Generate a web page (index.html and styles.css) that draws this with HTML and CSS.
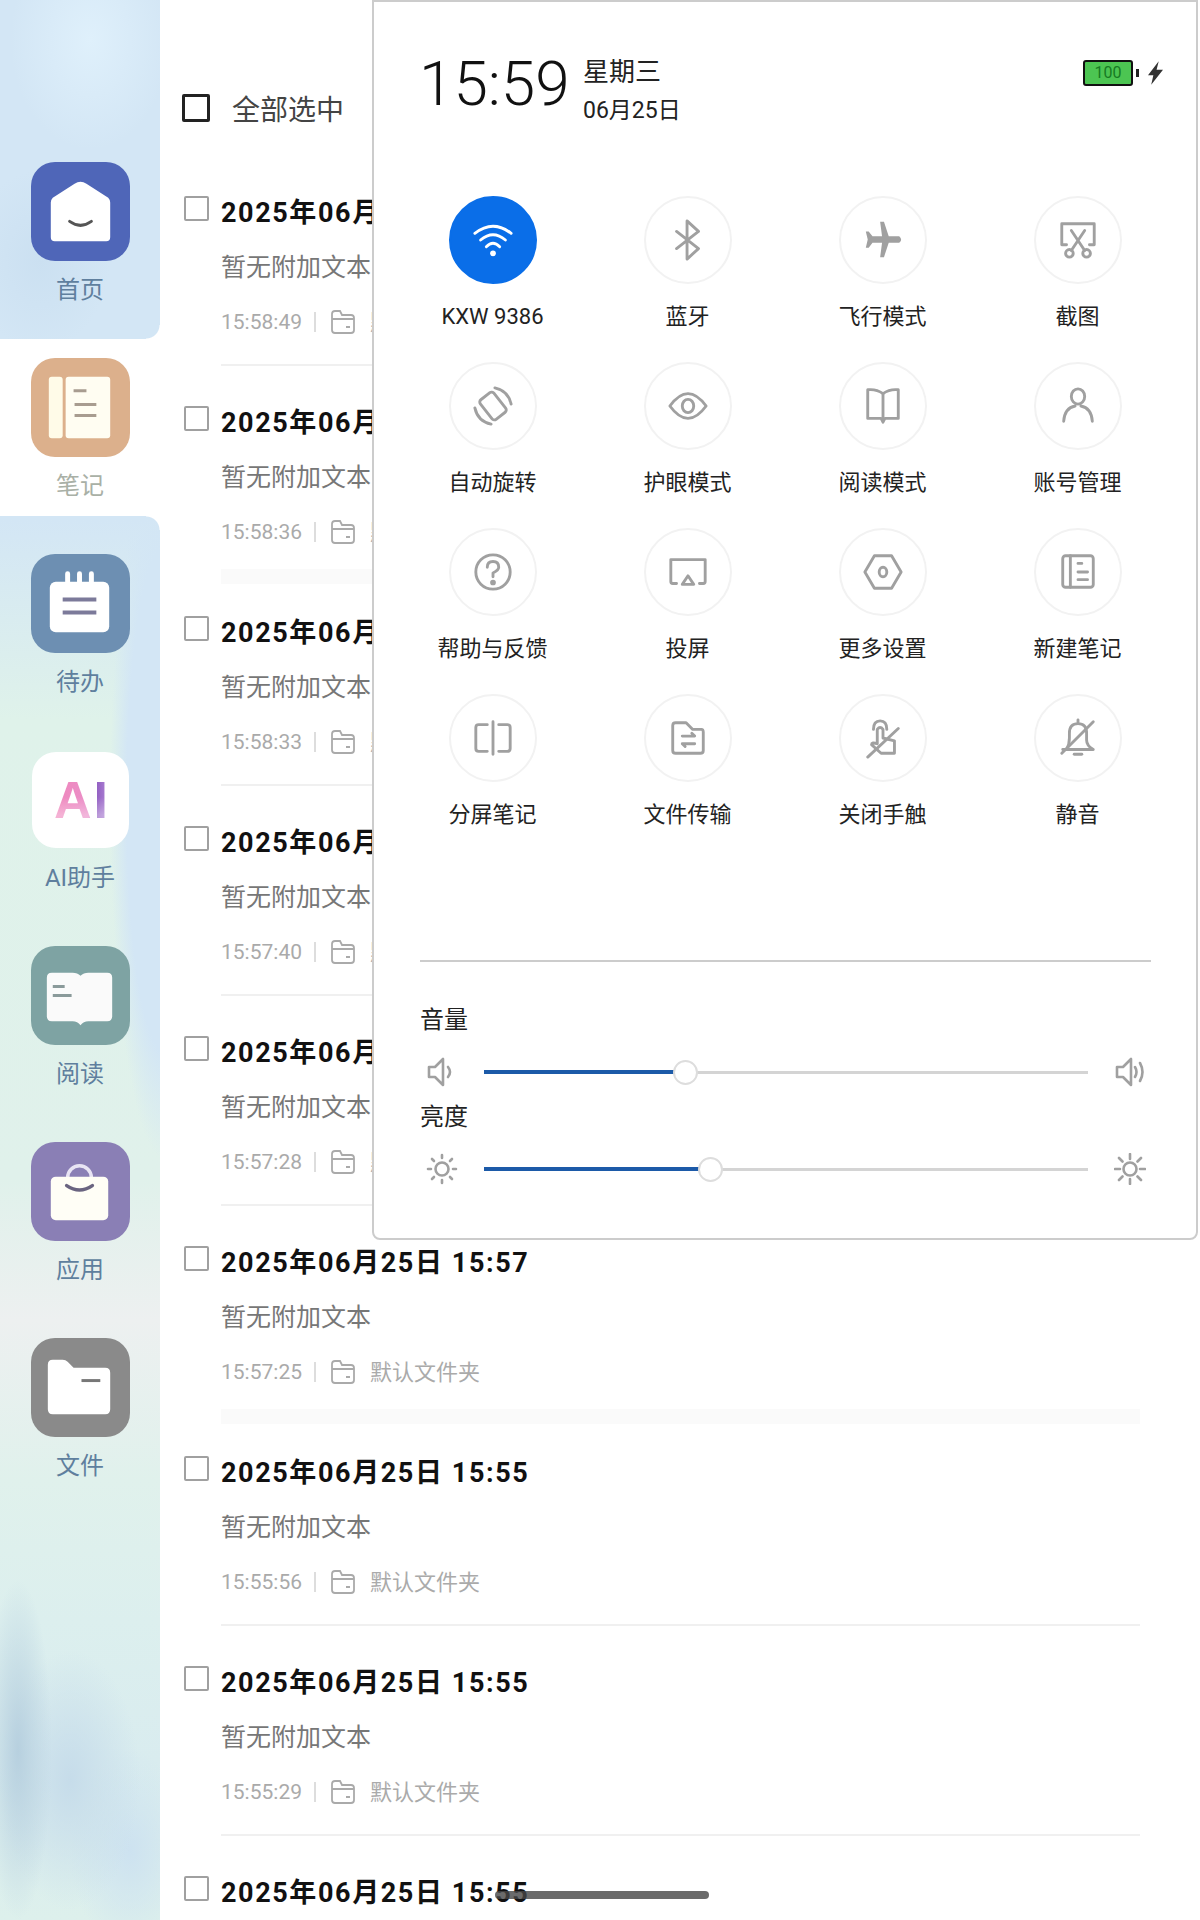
FILE: index.html
```html
<!DOCTYPE html>
<html lang="zh-CN">
<head>
    <meta charset="UTF-8">
    <meta name="viewport" content="width=device-width, initial-scale=1.0">
    <title>笔记</title>
    <link rel="stylesheet" href="styles.css">
</head>
<body>
<div class="app">

    <!-- left navigation -->
    <nav class="sidebar">
        <div class="nav-item">
            <div class="nav-icon home">
                <svg viewBox="0 0 100 100"><path d="M50 20 Q53 20 56 22 L78 36 Q80 38 80 41 V76 Q80 80 76 80 H24 Q20 80 20 76 V41 Q20 38 22 36 L44 22 Q47 20 50 20Z" fill="#fff"/><path d="M39 60 Q50 68 61 60" fill="none" stroke="#555" stroke-width="3" stroke-linecap="round"/></svg>
            </div>
            <span class="nav-label">首页</span>
        </div>
        <div class="nav-item active">
            <div class="nav-icon notes">
                <svg viewBox="0 0 100 100"><rect x="18" y="19" width="14" height="62" rx="3" fill="#fffbe8"/><rect x="35" y="19" width="45" height="62" rx="3" fill="#fffdf2"/><path d="M43 33H56M44 47H66M44 58H66" stroke="#a89c90" stroke-width="3"/></svg>
            </div>
            <span class="nav-label">笔记</span>
        </div>
        <div class="nav-item">
            <div class="nav-icon todo">
                <svg viewBox="0 0 100 100"><rect x="19" y="28" width="60" height="51" rx="6" fill="#fff"/><path d="M37 28V20M49 28V20M61 28V20" stroke="#fff" stroke-width="5" stroke-linecap="round"/><path d="M32 46H66M32 59H66" stroke="#7c7a9a" stroke-width="4"/></svg>
            </div>
            <span class="nav-label">待办</span>
        </div>
        <div class="nav-item">
            <div class="nav-icon ai"><span class="ai-text">AI</span></div>
            <span class="nav-label">AI助手</span>
        </div>
        <div class="nav-item">
            <div class="nav-icon read">
                <svg viewBox="0 0 100 100"><path d="M16 32 Q16 27 21 27 H42 Q47 27 50 30 Q53 27 58 27 H77 Q82 27 82 32 V71 Q82 76 77 76 H58 Q53 76 50 80 Q47 76 42 76 H21 Q16 76 16 71Z" fill="#fafafa"/><path d="M22 41H34M22 50H41" stroke="#8a9a9a" stroke-width="3"/></svg>
            </div>
            <span class="nav-label">阅读</span>
        </div>
        <div class="nav-item">
            <div class="nav-icon apps">
                <svg viewBox="0 0 100 100"><circle cx="49" cy="36" r="12" fill="none" stroke="#e8e4f4" stroke-width="3.5"/><rect x="20" y="35" width="58" height="44" rx="5" fill="#fffef6"/><path d="M36 44 Q49 53 62 44" fill="none" stroke="#6a6480" stroke-width="3.5" stroke-linecap="round"/></svg>
            </div>
            <span class="nav-label">应用</span>
        </div>
        <div class="nav-item">
            <div class="nav-icon files">
                <svg viewBox="0 0 100 100"><path d="M17 27 Q17 22 22 22 H32 Q35 22 37 24 L43 30 H75 Q80 30 80 35 V72 Q80 77 75 77 H22 Q17 77 17 72Z" fill="#fff"/><path d="M51 43H70" stroke="#777" stroke-width="3"/></svg>
            </div>
            <span class="nav-label">文件</span>
        </div>
    </nav>

    <!-- note list -->
    <main class="list">
        <div class="select-all">
            <span class="check check-all"></span>
            <span>全部选中</span>
        </div>
        <ul id="noteList" class="notes-list"></ul>
    </main>

    <!-- pulled down control panel -->
    <section class="panel">
        <header class="panel-head">
            <div class="clock">15:59</div>
            <div class="date">
                <div>星期三</div>
                <div class="date-day">06月25日</div>
            </div>
            <div class="battery">
                <span class="battery-body">100</span>
                <span class="battery-nub"></span>
                <svg class="bolt" viewBox="0 0 14 22"><path d="M10 0 L0 13 H5 L3 22 L14 8 H8Z" fill="#333"/></svg>
            </div>
        </header>

        <div class="tiles">
            <div class="tile on">
                <div class="tile-icon">
                    <svg viewBox="0 0 44 44" fill="none" stroke="#fff" stroke-width="3" stroke-linecap="round"><path d="M3 15 Q22 0 41 15"/><path d="M9 22 Q22 11 35 22"/><path d="M15 29 Q22 22 29 29"/><circle cx="22" cy="36" r="3" fill="#fff" stroke="none"/></svg>
                </div>
                <span>KXW 9386</span>
            </div>
            <div class="tile">
                <div class="tile-icon">
                    <svg viewBox="0 0 44 44"><path d="M10 13 L33 31 L21 42 V2 L33 13 L10 31"/></svg>
                </div>
                <span>蓝牙</span>
            </div>
            <div class="tile">
                <div class="tile-icon">
                    <svg viewBox="0 0 44 44"><path d="M19 3 H23 L28 18 H39 Q43 22 39 25 H28 L23 40 H19 L21 25 H11 L7 30 H4 L6 21.5 L4 13 H7 L11 18 H21Z" fill="#a0a0a0" stroke="none"/></svg>
                </div>
                <span>飞行模式</span>
            </div>
            <div class="tile">
                <div class="tile-icon">
                    <svg viewBox="0 0 44 44"><path d="M10 27 H5 V5 H39 V27 H34"/><path d="M15 12 L29 33 M29 12 L15 33"/><circle cx="13" cy="36" r="4"/><circle cx="31" cy="36" r="4"/></svg>
                </div>
                <span>截图</span>
            </div>

            <div class="tile">
                <div class="tile-icon">
                    <svg viewBox="0 0 44 44"><rect x="13" y="9" width="18" height="26" rx="3" transform="rotate(-38 22 22)"/><path d="M24 3 Q38 6 41 20 M20 41 Q6 38 3 24"/></svg>
                </div>
                <span>自动旋转</span>
            </div>
            <div class="tile">
                <div class="tile-icon">
                    <svg viewBox="0 0 44 44"><path d="M3 22 Q22 -4 41 22 Q22 48 3 22Z"/><ellipse cx="22" cy="22" rx="6" ry="7"/></svg>
                </div>
                <span>护眼模式</span>
            </div>
            <div class="tile">
                <div class="tile-icon">
                    <svg viewBox="0 0 44 44"><path d="M22 9 Q15 4 6 5 V35 H20 L22 39 L24 35 H38 V5 Q29 4 22 9Z"/><path d="M22 9 V35"/></svg>
                </div>
                <span>阅读模式</span>
            </div>
            <div class="tile">
                <div class="tile-icon">
                    <svg viewBox="0 0 44 44"><ellipse cx="22" cy="12" rx="7" ry="8"/><path d="M7 38 Q8 24 19 22 M37 38 Q36 24 25 22"/></svg>
                </div>
                <span>账号管理</span>
            </div>

            <div class="tile">
                <div class="tile-icon">
                    <svg viewBox="0 0 44 44"><circle cx="22" cy="22" r="18"/><path d="M16 17 Q16 11 22 11 Q28 11 28 17 Q28 20 22 23 V27"/><circle cx="22" cy="33" r="1.5" fill="#a0a0a0"/></svg>
                </div>
                <span>帮助与反馈</span>
            </div>
            <div class="tile">
                <div class="tile-icon">
                    <svg viewBox="0 0 44 44"><path d="M10 34 H6 Q4 34 4 32 V9 H40 V32 Q40 34 38 34 H34"/><path d="M22 26 L28 35 H16Z"/></svg>
                </div>
                <span>投屏</span>
            </div>
            <div class="tile">
                <div class="tile-icon">
                    <svg viewBox="0 0 44 44"><path d="M13 5 H31 L41 22 L31 39 H13 L3 22Z"/><ellipse cx="22" cy="22" rx="4" ry="5"/></svg>
                </div>
                <span>更多设置</span>
            </div>
            <div class="tile">
                <div class="tile-icon">
                    <svg viewBox="0 0 44 44"><rect x="6" y="5" width="32" height="33" rx="3"/><path d="M14 5 V38 M22 13 H26 M22 22 H32 M22 30 H32"/></svg>
                </div>
                <span>新建笔记</span>
            </div>

            <div class="tile">
                <div class="tile-icon">
                    <svg viewBox="0 0 44 44"><path d="M16 8 H7 Q4 8 4 11 V33 Q4 36 7 36 H16 M28 8 H37 Q40 8 40 11 V33 Q40 36 37 36 H28 M22 5 V39"/></svg>
                </div>
                <span>分屏笔记</span>
            </div>
            <div class="tile">
                <div class="tile-icon">
                    <svg viewBox="0 0 44 44"><path d="M6 9 Q6 6 9 6 H20 L27 13 H36 Q38 13 38 16 V35 Q38 38 35 38 H9 Q6 38 6 35Z"/><path d="M16 20 H29 L26 17 M29 28 H16 L19 31"/></svg>
                </div>
                <span>文件传输</span>
            </div>
            <div class="tile">
                <div class="tile-icon">
                    <svg viewBox="0 0 44 44"><path d="M12 13 Q12 4 19 4 Q26 4 26 13"/><path d="M16 28 V13 Q19 9 22 13 V22 L34 25 V38 H20 L10 29 Q10 26 16 28"/><path d="M6 42 L38 12"/></svg>
                </div>
                <span>关闭手触</span>
            </div>
            <div class="tile">
                <div class="tile-icon">
                    <svg viewBox="0 0 44 44"><path d="M22 3 V7 M10 34 Q13 29 13 22 V17 Q13 7 22 7 Q31 7 31 17 V24 Q31 30 38 34 H6"/><path d="M18 39 H26"/><path d="M5 38 L38 5"/></svg>
                </div>
                <span>静音</span>
            </div>
        </div>

        <div class="panel-rule"></div>

        <div class="sliders">
            <div class="slider-label">音量</div>
            <div class="slider-row">
                <svg class="slider-icon" viewBox="0 0 32 32"><path d="M3 11 H9 L17 3 V29 L9 21 H3Z"/><path d="M22 11 Q26 16 22 21"/></svg>
                <div class="track"><div class="fill" style="width:201px"></div><div class="thumb" style="left:201px"></div></div>
                <svg class="slider-icon" viewBox="0 0 32 32"><path d="M3 11 H9 L17 3 V29 L9 21 H3Z"/><path d="M21 11 Q24 16 21 21 M26 7 Q31 16 26 25"/></svg>
            </div>
            <div class="slider-label">亮度</div>
            <div class="slider-row">
                <svg class="slider-icon" viewBox="0 0 32 32"><circle cx="16" cy="16" r="6.5"/><path d="M16 2 V5 M16 27 V30 M2 16 H5 M27 16 H30 M6 6 L8 8 M24 24 L26 26 M6 26 L8 24 M24 8 L26 6"/></svg>
                <div class="track"><div class="fill" style="width:226px"></div><div class="thumb" style="left:226px"></div></div>
                <svg class="slider-icon" viewBox="0 0 32 32"><circle cx="16" cy="16" r="6.5"/><path d="M16 1 V6 M16 26 V31 M1 16 H6 M26 16 H31 M5 5 L8.5 8.5 M23.5 23.5 L27 27 M5 27 L8.5 23.5 M23.5 8.5 L27 5"/></svg>
            </div>
        </div>
    </section>

    <div class="home-bar"></div>
</div>

<script>
    const notes = [
        { title: '2025年06月25日 15:58', time: '15:58:49' },
        { title: '2025年06月25日 15:58', time: '15:58:36', thick: true },
        { title: '2025年06月25日 15:58', time: '15:58:33' },
        { title: '2025年06月25日 15:57', time: '15:57:40' },
        { title: '2025年06月25日 15:57', time: '15:57:28' },
        { title: '2025年06月25日 15:57', time: '15:57:25', thick: true },
        { title: '2025年06月25日 15:55', time: '15:55:56' },
        { title: '2025年06月25日 15:55', time: '15:55:29' },
        { title: '2025年06月25日 15:55' } // last one runs off the screen
    ];

    function renderNotes() {
        const noteList = document.getElementById('noteList');

        notes.forEach(note => {
            const li = document.createElement('li');
            li.className = `note ${note.thick ? 'thick' : ''}`;
            let html = `<span class="check"></span>
                <div class="note-body">
                    <div class="note-title">${note.title}</div>`;
            if (note.time) {
                html += `<div class="note-sub">暂无附加文本</div>
                    <div class="note-meta">
                        <span>${note.time}</span>
                        <i class="meta-sep"></i>
                        <svg class="meta-folder" viewBox="0 0 24 24" fill="none" stroke="#aaa" stroke-width="1.8"><path d="M1 4 Q1 1 4 1 H9 L11 5 H20 Q23 5 23 8 V20 Q23 23 20 23 H4 Q1 23 1 20Z"/><path d="M1 9 H23 M15 17 H19"/></svg>
                        <span class="meta-folder-name">默认文件夹</span>
                    </div>`;
            }
            li.innerHTML = html + '</div>';
            noteList.appendChild(li);
        });
    }

    renderNotes();
</script>
</body>
</html>
```

FILE: styles.css
```css
* {
    box-sizing: border-box;
}

html, body {
    margin: 0;
    height: 1920px;
    overflow: hidden;
    background-color: #fff;
}

body {
    font-family: Roboto, "Noto Sans CJK SC", sans-serif;
    color: #222;
}

.app {
    position: relative;
    display: flex;
    height: 1920px;
    overflow: hidden;
}

/* sidebar */
.sidebar {
    width: 160px;
    flex-shrink: 0;
    padding-top: 143px;
    background-color: #d3e6f5;
    background-image:
        radial-gradient(ellipse 34px 170px at 18px 1750px, #b7d0df 0%, rgba(183, 208, 223, 0) 100%),
        radial-gradient(ellipse 70px 130px at 70px 1780px, #c6dcea 0%, rgba(198, 220, 234, 0) 100%),
        radial-gradient(ellipse 60px 100px at 130px 1850px, #cde2f0 0%, rgba(205, 226, 240, 0) 100%),
        radial-gradient(ellipse 80px 110px at 90px 40px, #dff0fb 0%, rgba(223, 240, 251, 0) 100%),
        radial-gradient(ellipse 70px 90px at 40px 260px, #cbe0f1 0%, rgba(203, 224, 241, 0) 100%),
        radial-gradient(ellipse 55px 360px at 165px 800px, #d3e6f5 70%, rgba(211, 230, 245, 0) 100%),
        linear-gradient(180deg, #d3e6f5 0, #d3e6f5 520px, #dff2ea 720px, #e0f1eb 1180px, #edf0f0 1320px, #e0f1ec 1480px, #dcefee 1620px, #d9ecef 1760px, #ddf0ec 1920px);
    background-repeat: no-repeat;
}

.nav-item {
    position: relative;
    display: flex;
    flex-direction: column;
    align-items: center;
    height: 177px;
    margin-bottom: 19px;
    padding-top: 19px;
}

.nav-item.active {
    background-color: #fff;
}

/* rounded corners where the white tab meets the sidebar */
.nav-item.active::before,
.nav-item.active::after {
    content: "";
    position: absolute;
    right: 0;
    width: 14px;
    height: 14px;
}

.nav-item.active::before {
    top: -14px;
    background: radial-gradient(circle at 0 0, transparent 13px, #fff 14px);
}

.nav-item.active::after {
    bottom: -14px;
    background: radial-gradient(circle at 0 100%, transparent 13px, #fff 14px);
}

.nav-icon {
    width: 99px;
    height: 99px;
    border-radius: 24px;
    display: flex;
    align-items: center;
    justify-content: center;
}

.nav-icon svg {
    width: 99px;
    height: 99px;
}

.home { background-color: #4f66b8; }
.notes { background-color: #dcb08c; }
.todo { background-color: #6d8fb2; }
.read { background-color: #7ea3a3; }
.apps { background-color: #8a7fb5; }
.files { background-color: #8a8a8a; }

.ai {
    background-color: #fff;
    height: 96px;
    width: 97px;
    margin-top: 2px;
    margin-bottom: 1px;
}

.ai-text {
    font-family: "Liberation Sans", sans-serif;
    font-weight: 700;
    font-size: 52px;
    letter-spacing: 2px;
    margin-left: 4px;
    background: linear-gradient(90deg, #f088bc 0%, #ea8ec8 62%, #8c58be 72%, #b48ad8 100%);
    -webkit-background-clip: text;
    background-clip: text;
    color: transparent;
    -webkit-mask-image: linear-gradient(180deg, #000 45%, rgba(0, 0, 0, 0.65) 75%);
    mask-image: linear-gradient(180deg, #000 45%, rgba(0, 0, 0, 0.65) 75%);
}

.nav-label {
    margin-top: 8px;
    font-size: 24px;
    line-height: 42px;
    color: #5f7f9e;
}

.nav-item.active .nav-label {
    color: #a9b0a6;
}

/* list */
.list {
    flex-grow: 1;
    min-width: 0;
}

.select-all {
    display: flex;
    align-items: center;
    gap: 22px;
    height: 48px;
    margin-top: 84px;
    margin-left: 22px;
    font-size: 28px;
    color: #444;
}

.check {
    display: block;
    flex-shrink: 0;
    width: 25px;
    height: 25px;
    border: 2px solid #a0a0a0;
    border-radius: 2px;
}

.check-all {
    width: 28px;
    height: 28px;
    border: 3px solid #222;
}

.notes-list {
    list-style-type: none;
    margin: 0;
    padding: 0;
    margin-top: 56px;
}

.note {
    display: flex;
    gap: 12px;
    height: 210px;
    padding-left: 24px;
    padding-top: 10px;
}

.note .check {
    margin-top: -2px;
}

.note-body {
    flex-grow: 1;
    margin-right: 60px;
    height: 168px;
    border-bottom: 2px solid #f0f0f0;
}

.note.thick .note-body {
    height: 176px;
    border-bottom: 15px solid #fafafa;
}

.note-title {
    margin-top: -5px;
    font-size: 27px;
    line-height: 40px;
    font-weight: 700;
    letter-spacing: 1.6px;
    color: #111;
    white-space: nowrap;
}

.note-sub {
    margin-top: 15px;
    font-size: 25px;
    line-height: 40px;
    color: #777;
}

.note-meta {
    display: flex;
    align-items: center;
    gap: 12px;
    margin-top: 17px;
    font-size: 21px;
    line-height: 32px;
    color: #aaa;
    white-space: nowrap;
}

.meta-folder-name {
    font-size: 22px;
    margin-top: 2px;
}

.meta-sep {
    width: 2px;
    height: 20px;
    background-color: #ddd;
    margin-right: 3px;
}

.meta-folder {
    width: 24px;
    height: 24px;
    margin-right: 3px;
}

/* control panel */
.panel {
    position: absolute;
    top: 0;
    left: 372px;
    width: 826px;
    height: 1240px;
    padding: 0 45px 0 46px;
    background-color: #fff;
    border: 2px solid #ccc;
    border-radius: 0 0 8px 8px;
}

.panel-head {
    display: flex;
    align-items: flex-start;
    height: 194px;
    padding-top: 46px;
}

.clock {
    font-size: 62px;
    line-height: 72px;
    font-weight: 300;
    color: #111;
    width: 164px;
    margin-left: -1px;
}

.date {
    font-size: 26px;
    line-height: 37px;
    padding-top: 6px;
    color: #222;
}

.date-day {
    font-size: 23px;
    margin-top: 1px;
}

.battery {
    display: flex;
    align-items: center;
    margin-left: auto;
    margin-top: 12px;
    margin-right: -12px;
}

.battery-body {
    width: 50px;
    height: 26px;
    background-color: #4cc552;
    border: 2px solid #111;
    border-radius: 3px;
    font-size: 16px;
    line-height: 22px;
    text-align: center;
    color: #167a22;
}

.battery-nub {
    width: 3px;
    height: 8px;
    margin-left: 3px;
    background-color: #222;
}

.bolt {
    width: 15px;
    height: 24px;
    margin-left: 9px;
}

.tiles {
    display: grid;
    grid-template-columns: repeat(4, 195px);
    grid-auto-rows: 166px;
    margin-left: -25px;
    height: 764px;
    width: 780px;
}

.tile {
    display: flex;
    flex-direction: column;
    align-items: center;
    font-size: 22px;
    line-height: 30px;
    color: #222;
}

.tile-icon {
    width: 88px;
    height: 88px;
    margin-bottom: 18px;
    border: 2px solid #f2f2f2;
    border-radius: 50%;
    display: flex;
    align-items: center;
    justify-content: center;
}

.tile-icon svg {
    width: 42px;
    height: 42px;
    fill: none;
    stroke: #a0a0a0;
    stroke-width: 3;
    stroke-linejoin: round;
    stroke-linecap: round;
}

.tile.on .tile-icon {
    background-color: #0a6ee8;
    border-color: #0a6ee8;
}

.tile.on .tile-icon svg {
    stroke: #fff;
}

.panel-rule {
    width: 731px;
    height: 2px;
    background-color: #ccc;
}

.sliders {
    padding-top: 40px;
}

.slider-label {
    font-size: 24px;
    line-height: 36px;
    color: #222;
}

.slider-row {
    display: flex;
    align-items: center;
    height: 40px;
    margin-top: 14px;
    margin-bottom: 7px;
}

.slider-icon {
    width: 32px;
    height: 32px;
    flex-shrink: 0;
    fill: none;
    stroke: #a0a0a0;
    stroke-width: 2.6;
    stroke-linejoin: round;
    stroke-linecap: round;
}

.slider-row .slider-icon:first-child {
    margin-left: 6px;
    margin-right: 26px;
}

.slider-row .slider-icon:last-child {
    margin-left: 26px;
}

.track {
    position: relative;
    width: 604px;
    height: 3px;
    background-color: #d4d4d4;
}

.fill {
    position: absolute;
    top: -1px;
    left: 0;
    height: 4px;
    background-color: #1c5aa8;
}

.thumb {
    position: absolute;
    top: -11px;
    width: 25px;
    height: 25px;
    margin-left: -12px;
    background-color: #fff;
    border: 2px solid #ddd;
    border-radius: 50%;
}

.home-bar {
    position: absolute;
    left: 495px;
    top: 1891px;
    width: 214px;
    height: 8px;
    border-radius: 4px;
    background-color: rgba(70, 70, 70, 0.8);
}
```
